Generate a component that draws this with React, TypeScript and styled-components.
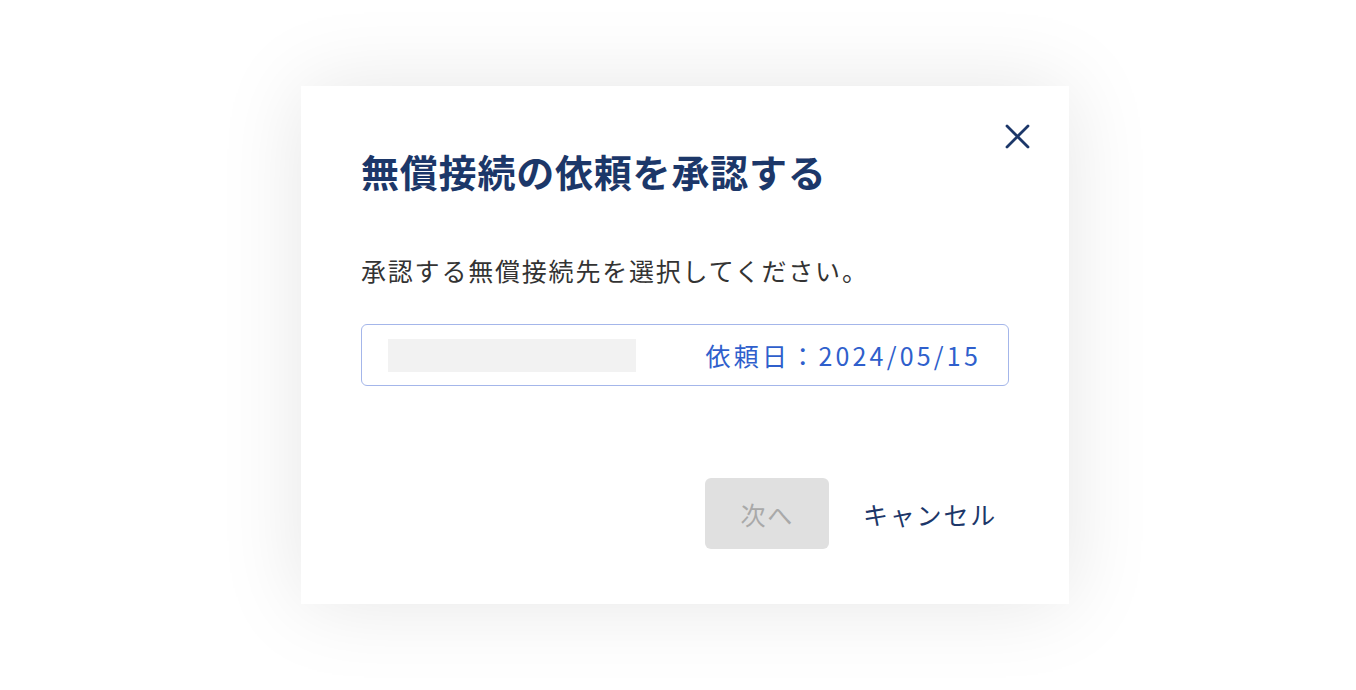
import React from "react";
import styled, { createGlobalStyle } from "styled-components";

const GlobalStyle = createGlobalStyle`
	html, body {
		margin: 0;
		padding: 0;
		background: #ffffff;
	}
	body {
		font-family: "Noto Sans CJK JP", "Noto Sans", sans-serif;
		color: #333333;
	}
`;

const Page = styled.div`
	width: 1356px;
	height: 690px;
	display: flex;
	align-items: center;
	justify-content: center;
	padding-left: 14px;
	box-sizing: border-box;
`;

const Modal = styled.div`
	width: 768px;
	height: 518px;
	box-sizing: border-box;
	background: #ffffff;
	box-shadow: 0 0 80px rgba(0, 0, 0, 0.1);
	padding: 38px 39px 55px 60px;
	display: flex;
	flex-direction: column;
`;

const Header = styled.div`
	display: flex;
	justify-content: space-between;
	align-items: flex-start;
`;

const Title = styled.h2`
	margin: 18px 0 0;
	font-size: 38px;
	line-height: 57px;
	font-weight: 700;
	letter-spacing: 0.8px;
	color: #1c3769;
`;

const CloseButton = styled.button`
	width: 25px;
	height: 25px;
	padding: 0;
	border: none;
	background: none;
	cursor: pointer;
	display: flex;
	color: #1c3769;
`;

const Content = styled.div`
	padding-right: 21px;
	display: flex;
	flex-direction: column;
	flex: 1;
`;

const Lead = styled.p`
	margin: 51px 0 0;
	font-size: 25px;
	line-height: 40px;
	letter-spacing: 1.8px;
	color: #333333;
`;

const Option = styled.div`
	margin-top: 34px;
	height: 62px;
	box-sizing: border-box;
	border: 1px solid #a4b6ea;
	border-radius: 6px;
	padding: 0 30px 0 26px;
	display: flex;
	align-items: center;
	justify-content: space-between;
`;

const NamePlaceholder = styled.div`
	width: 248px;
	height: 33px;
	background: #f2f2f2;
`;

const RequestDate = styled.span`
	font-size: 25px;
	letter-spacing: 3.2px;
	margin-right: -3px;
	color: #2f5fcc;
`;

const Footer = styled.div`
	margin-top: auto;
	display: flex;
	justify-content: flex-end;
	align-items: center;
	gap: 17px;
`;

const Button = styled.button<{ primary?: boolean }>`
	height: 71px;
	border: none;
	border-radius: 6px;
	font-family: inherit;
	font-size: 25px;
	letter-spacing: 1.8px;
	padding: ${(props) => (props.primary ? "0 35px" : "0 12px 0 17px")};
	background: ${(props) => (props.primary ? "#e0e0e0" : "transparent")};
	color: ${(props) => (props.primary ? "#a9a9a9" : "#1c3769")};
	cursor: ${(props) => (props.primary ? "default" : "pointer")};
`;

const App: React.FC = () => {
	return (
		<>
			<GlobalStyle />
			<Page>
				<Modal>
					<Header>
						<Title>無償接続の依頼を承認する</Title>
						<CloseButton aria-label="閉じる">
							<svg width="25" height="25" viewBox="0 0 25 25">
								<path
									d="M2 2 L23 23 M23 2 L2 23"
									stroke="currentColor"
									strokeWidth="2.8"
									strokeLinecap="round"
								/>
							</svg>
						</CloseButton>
					</Header>
					<Content>
						<Lead>承認する無償接続先を選択してください。</Lead>
						<Option>
							<NamePlaceholder />
							<RequestDate>依頼日：2024/05/15</RequestDate>
						</Option>
						<Footer>
							<Button primary disabled>
								次へ
							</Button>
							<Button>キャンセル</Button>
						</Footer>
					</Content>
				</Modal>
			</Page>
		</>
	);
};

export default App;
